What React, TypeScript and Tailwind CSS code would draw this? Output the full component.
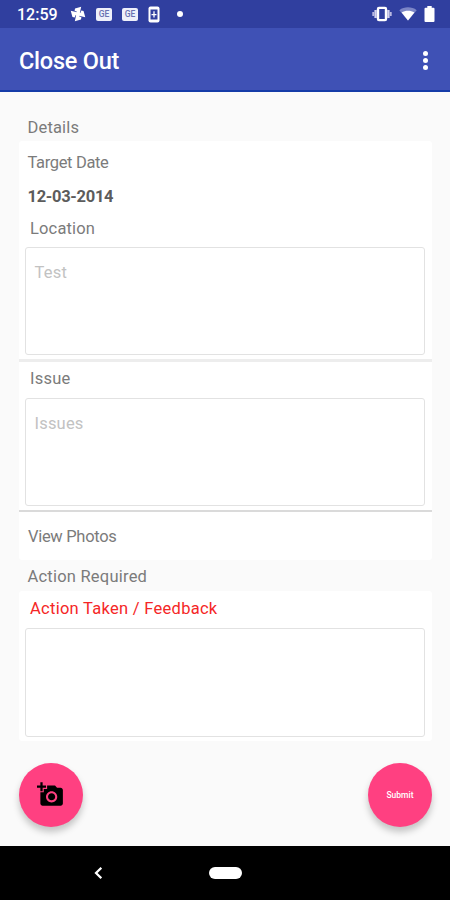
import type { ReactNode } from 'react';
import clsx from 'clsx';

function GeBadge() {
  return (
    <span className="flex h-[13px] w-[16px] items-center justify-center rounded-[2px] bg-[#eef0fa] text-[8.5px] font-medium leading-none text-[#6a72b2]">
      GE
    </span>
  );
}

function StatusBar() {
  return (
    <div className="flex h-7 items-center bg-[#303f9f] pl-[17px] pr-[15px] text-white">
      <span className="w-[41px] whitespace-nowrap pt-[2px] text-[16px] font-medium leading-[26px]">12:59</span>

      {/* Notifications */}
      <svg className="ml-[12px] h-[16px] w-[16px]" viewBox="0 0 15 15" fill="#fff">
        <g transform="rotate(12 7.5 7.5)">
          <path d="M9 8.4V.2L3.7 3V5.1L6.1 5.6V7.5z" />
          <path d="M6.6 9h8.2L12 3.7H9.9L9.4 6.1H7.5z" />
          <path d="M6 6.6v8.2L11.3 12V9.9L8.9 9.4V7.5z" />
          <path d="M8.4 6H.2L3 11.3H5.1L5.6 8.9H7.5z" />
        </g>
      </svg>
      <div className="ml-[10px] flex items-center gap-[10px]">
        <GeBadge />
        <GeBadge />
      </div>
      <svg className="ml-[10px] h-[17px] w-[12px]" viewBox="0 0 12 17">
        <rect x="0.5" y="0.5" width="11" height="16" rx="2" fill="#fff" />
        <rect x="2.5" y="3.5" width="7" height="10" fill="#303f9f" />
        <path d="M6 5.3v6.2M3.5 8.7h5" stroke="#fff" strokeWidth="1.3" />
      </svg>
      <span className="ml-[17px] h-[6px] w-[6px] rounded-full bg-white" />

      {/* System */}
      <svg className="ml-auto h-4 w-[20px]" viewBox="0 0 20 16">
        <rect x="6" y="1.9" width="8" height="12.2" rx="1" fill="none" stroke="#fff" strokeWidth="2.4" />
        <path d="M3.6 4v8M16.4 4v8" stroke="#d5d4ef" strokeWidth="2.4" />
        <path d="M1.3 6v4M18.7 6v4" stroke="#b9b9e2" strokeWidth="2" />
      </svg>
      <svg className="ml-[7px] h-[14px] w-[18px]" viewBox="0 0 18 14">
        <path d="M0.3 3.2C5.2-.6 12.8-.6 17.7 3.2L9 13.6z" fill="#7c86c6" />
        <path d="M2.6 5.4C6.2 3.2 11.8 3.2 15.4 5.4L9 13.6z" fill="#fff" />
      </svg>
      <svg className="ml-[7px] h-4 w-[11px]" viewBox="0 0 11 16" fill="#fff">
        <path d="M3.3 0h4.4v1.8H9.5q1 0 1 1V15q0 1-1 1h-8q-1 0-1-1V2.8q0-1 1-1H3.3z" />
      </svg>
    </div>
  );
}

function AppBar() {
  return (
    <header className="flex h-16 items-center justify-between border-b-2 border-[#153ca8] bg-[#3f51b5] pl-[19px] pr-[22px] pt-[5px]">
      <h1 className="text-[23.5px] font-medium leading-none tracking-[-0.25px] text-white">Close Out</h1>
      <button aria-label="More options" className="flex flex-col items-center gap-[2px] pb-[3px]">
        <span className="h-[5px] w-[5px] rounded-full bg-white" />
        <span className="h-[5px] w-[5px] rounded-full bg-white" />
        <span className="h-[5px] w-[5px] rounded-full bg-white" />
      </button>
    </header>
  );
}

function Label({ children, className }: { children: ReactNode; className?: string }) {
  return <div className={clsx('whitespace-nowrap text-[16.5px] leading-5', className)}>{children}</div>;
}

function TextBox({ placeholder, className }: { placeholder?: string; className?: string }) {
  return (
    <div
      className={clsx(
        'ml-[6px] mr-[7px] rounded-[3px] border-[1.5px] border-[#e2e2e2] bg-white px-[8.5px] pt-[15px] text-[16.5px] leading-5 tracking-[0.2px] text-[#c2c2c2]',
        className
      )}
    >
      {placeholder}
    </div>
  );
}

export default function App() {
  return (
    <div className="flex h-[900px] w-[450px] flex-col overflow-hidden bg-[#fafafa] font-[Roboto,sans-serif] text-[#7b7b7b]">
      <StatusBar />
      <AppBar />

      <main className="flex flex-1 flex-col pl-[19px] pr-[18px]">
        <Label className="pl-[8.5px] pt-[26px] tracking-[0.15px]">Details</Label>

        <section className="mt-[3px] h-[419px] rounded-[3px] bg-white">
          <Label className="pl-[8.5px] pt-3 tracking-[-0.35px]">Target Date</Label>
          <Label className="mt-[14px] pl-[8.5px] font-bold tracking-[-0.3px] text-[#5c5c5c]">12-03-2014</Label>
          <Label className="mt-3 pl-[11px] tracking-[0.15px]">Location</Label>
          <TextBox placeholder="Test" className="mt-[8px] h-[108px]" />
          <div className="mt-[4px] h-[3px] bg-[#ededed]" />
          <Label className="mt-[7px] pl-[11px] tracking-[0.25px]">Issue</Label>
          <TextBox placeholder="Issues" className="mt-[9px] h-[108px]" />
          <div className="mt-[4px] h-[2px] bg-[#dadada]" />
          <Label className="mt-[15px] pl-[9px] tracking-[-0.3px]">View Photos</Label>
        </section>

        <Label className="mt-[7px] pl-[8.5px] tracking-[0.22px]">Action Required</Label>

        <section className="mt-1 h-[150px] rounded-[3px] bg-white">
          <Label className="pl-[11px] pt-2 tracking-[0.28px] text-[#f52626]">Action Taken / Feedback</Label>
          <TextBox className="mt-[9px] h-[109px]" />
        </section>

        {/* Floating buttons */}
        <div className="mt-[22px] flex justify-between">
          <button
            aria-label="Add photo"
            className="flex h-16 w-16 items-center justify-center rounded-full bg-[#ff4081] pb-px pr-px shadow-[0_5px_7px_rgba(0,0,0,0.22)]"
          >
            <svg className="h-[27px] w-[27px]" viewBox="0 0 24 24" fill="#000">
              <path d="M3 4V1h2v3h3v2H5v3H3V6H0V4h3zm3 6V7h3V4h7l1.83 2H21c1.1 0 2 .9 2 2v12c0 1.1-.9 2-2 2H5c-1.1 0-2-.9-2-2V10h3zm7 9c2.76 0 5-2.24 5-5s-2.24-5-5-5-5 2.24-5 5 2.24 5 5 5zm-3.2-5c0 1.77 1.43 3.2 3.2 3.2s3.2-1.43 3.2-3.2-1.43-3.2-3.2-3.2-3.2 1.43-3.2 3.2z" />
            </svg>
          </button>
          <button className="flex h-16 w-16 items-center justify-center rounded-full bg-[#ff4081] text-[8.5px] font-medium text-white shadow-[0_5px_7px_rgba(0,0,0,0.22)]">
            Submit
          </button>
        </div>
      </main>

      {/* Navigation bar */}
      <nav className="flex h-[54px] shrink-0 items-center bg-black pl-[94px]">
        <svg className="h-3 w-2" viewBox="0 0 8 12" fill="none" stroke="#fff" strokeWidth="2.2">
          <path d="M7.3 0.8L2 6l5.3 5.2" />
        </svg>
        <span className="ml-[107px] h-3 w-[33px] rounded-full bg-white" />
      </nav>
    </div>
  );
}
